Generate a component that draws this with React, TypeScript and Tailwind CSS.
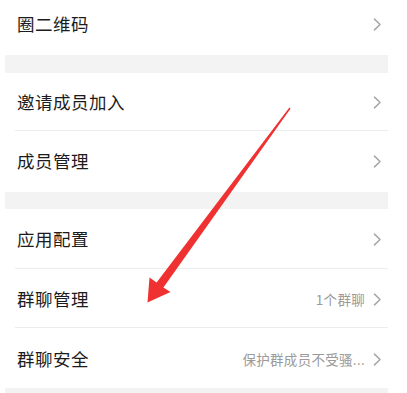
import { ReactNode } from "react";

interface RowProps {
    title: string;
    extra?: string;
    className?: string;
    divider?: boolean;
}

const Chevron = () => (
    <svg width="9" height="13" viewBox="0 0 9 13" className="shrink-0">
        <path d="M1.5 1.2 L7 6.5 L1.5 11.8" fill="none" stroke="#a8a8a8" strokeWidth="1.6" strokeLinecap="round" strokeLinejoin="round" />
    </svg>
);

const Row = ({ title, extra, className, divider }: RowProps) => {
    return (
        <div className={`relative flex items-center bg-white pl-[12px] pr-[6px] ${className ?? "h-[59px]"}`}>
            <span className="flex-1 text-[17.5px] text-[#1c1c1c] tracking-[0.5px]">{title}</span>
            {extra && <span className="mr-[8px] text-[13.5px] text-[#9a9a9a] tracking-[0.3px]">{extra}</span>}
            <Chevron />
            {divider && <div className="absolute bottom-0 left-[10px] right-0 h-px bg-[#ececec]" />}
        </div>
    );
};

const Gap = ({ children }: { children?: ReactNode }) => (
    <div className="h-[17px] bg-[#f3f3f4]">{children}</div>
);

export default function App() {
    return (
        <div className="relative w-[407px] h-[393px] overflow-hidden bg-white font-['Noto_Sans_CJK_SC','Noto_Sans',sans-serif]">
            <div className="ml-[5px] w-[383px] flex flex-col">
                <Row title="圈二维码" className="h-[55px] pb-[6px]" />
                <div className="h-[18px] bg-[#f3f3f4]" />
                <Row title="邀请成员加入" className="h-[58px]" divider />
                <Row title="成员管理" className="h-[61px]" />
                <Gap />
                <Row title="应用配置" className="h-[60px]" divider />
                <Row title="群聊管理" extra="1个群聊" className="h-[59px] pt-[2px]" divider />
                <Row title="群聊安全" extra="保护群成员不受骚..." className="h-[60px] pt-[2px]" />
                <div className="h-[10px] bg-[#f3f3f4]" />
            </div>

            {/* red annotation arrow */}
            <svg className="absolute left-0 top-0 pointer-events-none" width="407" height="393" viewBox="0 0 407 393">
                <polygon
                    points="289.4,107.6 156.6,282.4 149.5,277.5 147.5,302.5 170.5,292 163.4,287.6 290.6,108.4"
                    fill="#ef3131"
                />
            </svg>
        </div>
    );
}
